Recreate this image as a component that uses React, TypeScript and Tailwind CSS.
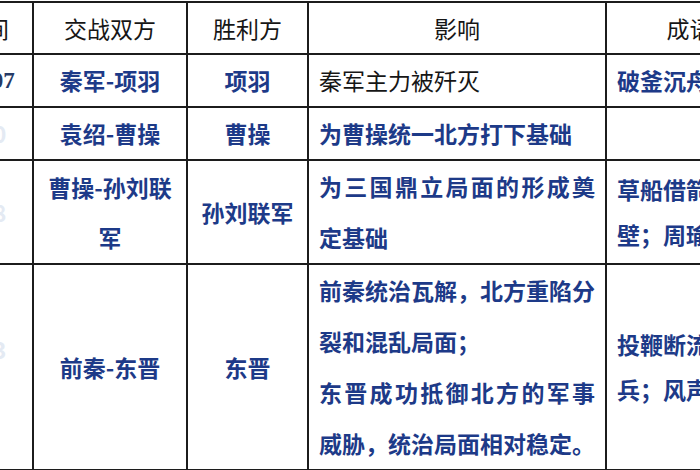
const blue = "text-[#1d3a88]";

const cell = "border-2 border-[#1c1c1c] px-[10px] align-middle";

function Justified({ text, full = true }: { text: string; full?: boolean }) {
  return (
    <div
      className={
        full
          ? "whitespace-nowrap text-justify [text-align-last:justify]"
          : "whitespace-nowrap text-left"
      }
    >
      {text}
    </div>
  );
}

export default function App() {
  return (
    <div className="w-[700px] h-[470px] overflow-hidden bg-white">
      <table className="table-fixed border-collapse ml-[-62px] mt-px w-[880px] text-[23px] leading-[51px] font-['Noto_Sans_CJK_SC','Noto_Sans',sans-serif] text-[#161616]">
        <colgroup>
          <col className="w-[94px]" />
          <col className="w-[154px]" />
          <col className="w-[121px]" />
          <col className="w-[298px]" />
          <col className="w-[213px]" />
        </colgroup>
        <thead>
          <tr className="leading-[50px]">
            <th className={`${cell} font-normal text-center`}>时间</th>
            <th className={`${cell} font-normal text-center`}>交战双方</th>
            <th className={`${cell} font-normal text-center`}>胜利方</th>
            <th className={`${cell} font-normal text-center`}>影响</th>
            <th className={`${cell} font-normal text-center`}>成语典故</th>
          </tr>
        </thead>
        <tbody className="font-semibold">
          <tr>
            <td className={`${cell} text-center font-bold text-[#263a66] font-['Liberation_Serif','Noto_Sans_CJK_SC',serif]`}>
              前207
            </td>
            <td className={`${cell} text-center ${blue}`}>秦军-项羽</td>
            <td className={`${cell} text-center ${blue}`}>项羽</td>
            <td className={`${cell} font-normal`}>秦军主力被歼灭</td>
            <td className={`${cell} ${blue} whitespace-nowrap`}>破釜沉舟</td>
          </tr>
          <tr>
            <td className={`${cell} text-center text-[#e4eaf3]`}>200</td>
            <td className={`${cell} text-center ${blue}`}>袁绍-曹操</td>
            <td className={`${cell} text-center ${blue}`}>曹操</td>
            <td className={`${cell} ${blue} whitespace-nowrap`}>为曹操统一北方打下基础</td>
            <td className={cell}></td>
          </tr>
          <tr>
            <td className={`${cell} text-center text-[#e4eaf3]`}>208</td>
            <td className={`${cell} text-center ${blue} leading-[50px]`}>
              曹操-孙刘联
              <br />军
            </td>
            <td className={`${cell} text-center ${blue}`}>孙刘联军</td>
            <td className={`${cell} ${blue}`}>
              <Justified text="为三国鼎立局面的形成奠" />
              <Justified text="定基础" full={false} />
            </td>
            <td className={`${cell} ${blue} leading-[45px] whitespace-nowrap`}>
              草船借箭；火烧赤
              <br />
              壁；周瑜打黄盖
            </td>
          </tr>
          <tr>
            <td className={`${cell} text-center text-[#e4eaf3] pb-[36px]`}>383</td>
            <td className={`${cell} text-center ${blue}`}>前秦-东晋</td>
            <td className={`${cell} text-center ${blue}`}>东晋</td>
            <td className={`${cell} ${blue}`}>
              <Justified text="前秦统治瓦解，北方重陷分" />
              <Justified text="裂和混乱局面；" full={false} />
              <Justified text="东晋成功抵御北方的军事" />
              <Justified text="威胁，统治局面相对稳定。" />
            </td>
            <td className={`${cell} ${blue} leading-[45px] whitespace-nowrap`}>
              投鞭断流；草木皆
              <br />
              兵；风声鹤唳
            </td>
          </tr>
        </tbody>
      </table>
    </div>
  );
}
